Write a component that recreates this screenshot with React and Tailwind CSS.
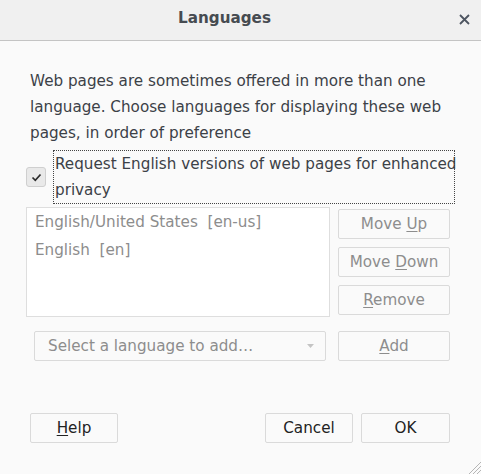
import React from 'react';

const font = { fontFamily: '"DejaVu Sans", "Liberation Sans", sans-serif' };

function Btn({ children, disabled, className = '' }) {
  return (
    <button
      className={`h-[30px] rounded-[2px] border border-[#dadada] bg-[#fafafa] text-[15.2px] ${
        disabled ? 'text-[#8d8d8d]' : 'text-[#222]'
      } ${className}`}
    >
      {children}
    </button>
  );
}

export default function App() {
  return (
    <div className="flex h-[474px] w-[481px] flex-col overflow-hidden bg-[#fafafa]" style={font}>
      {/* title bar */}
      <div className="flex h-[41px] shrink-0 items-center border-b border-[#c4c4c4] bg-[#f0f0f0]">
        <div className="flex-1 pb-[4px] text-center text-[15.2px] font-bold text-[#464b51]">Languages</div>
        <div className="flex w-[32px] items-center justify-center pb-[2px] pr-[2px]">
          <svg width="11" height="11" viewBox="0 0 11 11">
            <path d="M1 1L10 10M10 1L1 10" stroke="#4d5561" strokeWidth="1.8" />
          </svg>
        </div>
      </div>

      <div className="flex flex-1 flex-col px-[26px]">
        <p className="mt-[27px] pl-[4px] text-[15.2px] leading-[26px] text-[#3c4147]">
          Web pages are sometimes offered in more than one language. Choose languages for displaying these web
          pages, in order of preference
        </p>

        {/* checkbox */}
        <div className="mt-[4px] flex items-center">
          <div className="flex h-[20px] w-[20px] items-center justify-center rounded-[3px] border border-[#cfcfcf] bg-[#e9e9e9]">
            <svg width="11" height="9" viewBox="0 0 11 9">
              <path d="M1.5 4.5L4.3 7.3L9.5 1.5" fill="none" stroke="#2b2b2b" strokeWidth="1.7" />
            </svg>
          </div>
          <div className="ml-[7px] w-[402px] whitespace-nowrap border border-dotted border-[#444] pl-[1px] text-[15.2px] leading-[26px] text-[#3c4147]">
            Request English versions of web pages for enhanced
            <br />
            privacy
          </div>
        </div>

        {/* list + side buttons */}
        <div className="mt-[3px] flex gap-[8px]">
          <div className="h-[110px] w-[304px] border border-[#dedede] bg-white text-[15.2px] text-[#8d8d8d]">
            <div className="h-[28px] px-[8px] leading-[28px] whitespace-pre">English/United States  [en-us]</div>
            <div className="h-[28px] px-[8px] leading-[28px] whitespace-pre">English  [en]</div>
          </div>
          <div className="mt-[2px] flex w-[112px] flex-col gap-[8px]">
            <Btn disabled>
              Move <u className="underline-offset-2">U</u>p
            </Btn>
            <Btn disabled>
              Move <u className="underline-offset-2">D</u>own
            </Btn>
            <Btn disabled>
              <u className="underline-offset-2">R</u>emove
            </Btn>
          </div>
        </div>

        {/* select row */}
        <div className="mt-[14px] flex">
          <div className="ml-[8px] flex h-[30px] w-[292px] items-center justify-between rounded-[2px] border border-[#dadada] bg-[#fafafa] pl-[13px] pr-[11px] text-[15.2px] text-[#8d8d8d]">
            <span>Select a language to add…</span>
            <svg width="7" height="4" viewBox="0 0 7 4">
              <path d="M0 0H7L3.5 4Z" fill="#c4c4c4" />
            </svg>
          </div>
          <Btn disabled className="ml-[12px] w-[112px]">
            <u className="underline-offset-2">A</u>dd
          </Btn>
        </div>

        {/* footer */}
        <div className="mt-[52px] flex items-center">
          <Btn className="ml-[4px] w-[88px]">
            <u className="underline-offset-2">H</u>elp
          </Btn>
          <div className="flex-1" />
          <Btn className="w-[88px]">Cancel</Btn>
          <Btn className="ml-[8px] mr-[5px] w-[89px]">OK</Btn>
        </div>
      </div>

      <div className="flex justify-end">
        <svg width="14" height="14" viewBox="0 0 14 14" className="-mt-[14px]">
          <path d="M14 2L2 14M14 6L6 14M14 10L10 14" stroke="#b5b5b5" strokeWidth="1" />
        </svg>
      </div>
    </div>
  );
}
